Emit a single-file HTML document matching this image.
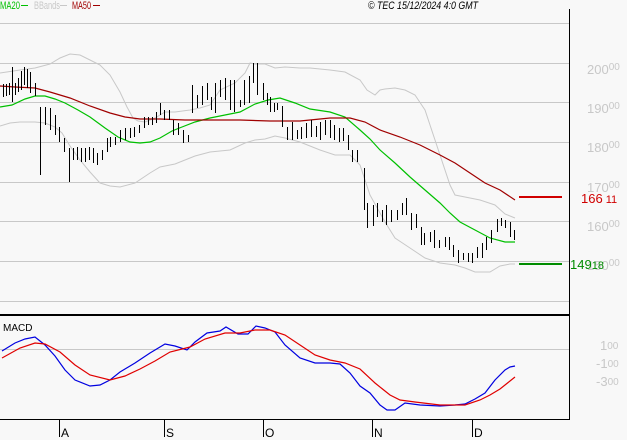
<!DOCTYPE html>
<html><head><meta charset="utf-8"><style>
html,body{margin:0;padding:0;background:#f8f8f8;}
svg{display:block;font-family:"Liberation Sans",Arial,sans-serif;}
</style></head><body>
<svg width="627" height="440" viewBox="0 0 627 440" xmlns="http://www.w3.org/2000/svg">
<rect width="627" height="440" fill="#f8f8f8"/>
<g stroke="#c8c8c8" stroke-width="1">
<line x1="0" y1="23.5" x2="569" y2="23.5"/>
<line x1="0" y1="63.5" x2="569" y2="63.5"/>
<line x1="0" y1="102.5" x2="569" y2="102.5"/>
<line x1="0" y1="142.5" x2="569" y2="142.5"/>
<line x1="0" y1="182.5" x2="569" y2="182.5"/>
<line x1="0" y1="221.5" x2="569" y2="221.5"/>
<line x1="0" y1="261.5" x2="569" y2="261.5"/>
<line x1="0" y1="301.5" x2="569" y2="301.5"/>
<line x1="0" y1="349.5" x2="569" y2="349.5"/>
</g>
<line x1="569.5" y1="9" x2="569.5" y2="420" stroke="#000"/>
<line x1="0" y1="315" x2="569" y2="315" stroke="#000" stroke-width="2"/>
<line x1="0" y1="419.5" x2="569" y2="419.5" stroke="#000"/>
<g stroke="#000"><line x1="59.5" y1="419" x2="59.5" y2="437"/><line x1="164.5" y1="419" x2="164.5" y2="437"/><line x1="263.5" y1="419" x2="263.5" y2="437"/><line x1="372.5" y1="419" x2="372.5" y2="437"/><line x1="472.5" y1="419" x2="472.5" y2="437"/></g>
<g font-size="12" fill="#000"><text x="61" y="437">A</text><text x="166" y="437">S</text><text x="265" y="437">O</text><text x="374" y="437">N</text><text x="474" y="437">D</text></g>
<g fill="none" stroke="#c8c8c8" stroke-width="1">
<polyline points="0,73 20,70 35,68 50,64 60,58 70,54 80,55 90,60 100,65 110,75 120,92 127,107 133,118 138,121 145,122 155,118 165,112 175,112 190,110 200,108 210,105 220,90 235,83 245,73 250,63 255,64 265,64 275,68 285,67 300,68 310,68 330,70 345,72 360,80 367,90 375,95 380,90 385,89 395,88 405,90 415,95 425,110 430,125 440,155 450,185 455,195 465,197 480,200 495,205 505,214 515,218"/>
<polyline points="0,126 10,123 20,122 35,122 45,123 55,127 62,133 70,146 80,160 90,172 100,183 110,186 120,187 135,183 150,173 160,167 175,164 185,160 195,156 210,152 230,150 245,143 255,140 265,139 275,136 285,138 300,142 320,150 335,155 350,155 360,165 370,195 385,222 395,238 410,248 425,258 440,263 455,265 465,268 475,272 490,272 500,266 510,264 515,264"/>
</g>
<polyline fill="none" stroke="#00c000" stroke-width="1.2" points="0,107 12,105 25,99 35,96 45,96 55,99 65,103 78,110 90,117 105,128 118,137 130,142 140,143 150,142 160,138 172,131 182,127 195,122 210,118 225,115 240,112 255,104 268,100 280,98 295,103 310,109 330,112 345,117 360,130 370,139 380,150 395,163 410,177 425,190 440,203 450,213 460,222 475,230 490,238 505,242 515,242"/>
<polyline fill="none" stroke="#a00000" stroke-width="1.2" points="0,86 15,87 35,88 50,92 70,98 90,106 110,113 125,117 140,119 160,119 185,120 210,120 240,120 270,121 300,121 330,118 350,118 365,122 380,130 400,137 420,145 440,155 455,163 470,173 485,183 500,190 515,200"/>
<g transform="translate(0.5,0)">
<path stroke="#000" stroke-width="1" fill="none" d="M3,84V97M6,84V96M9,83V95M12,67V102M15,83V95M18,78V92M21,71V90M24,67V85M27,69V88M30,72V93M35,83V96M40,107V175M45,107V125M50,108V130M55,115V135M59,127V142M64,138V152M69,148V182M73,148V160M77,147V160M81,148V162M85,148V162M89,147V160M93,148V163M97,153V165M102,150V160M107,138V152M110,137V147M115,137V145M120,130V142M125,128V140M130,128V138M134,127V137M139,125V133M144,117V128M148,117V125M152,117V125M156,112V123M160,103V115M164,110V120M169,110V120M173,120V135M178,123V135M183,130V143M188,135V142M192,85V113M197,95V108M202,86V105M207,83V100M211,97V110M215,83V113M220,80V97M225,78V100M230,80V110M234,80V112M240,100V107M244,80V105M249,76V103M253,63V83M257,63V95M263,83V100M267,93V105M270,97V112M274,103V112M277,103V110M282,106V127M287,127V140M292,122V140M297,130V139M301,127V139M306,123V138M311,120V137M316,126V137M320,122V140M325,120V135M330,120V138M334,125V140M339,128V142M343,128V141M348,135V150M352,150V162M357,150V162M364,168V210M367,203V228M373,205V226M377,203V217M382,210V222M386,205V225M391,210V222M397,210V220M402,203V215M406,198V215M411,213V230M416,214V228M421,227V245M424,233V245M430,232V242M434,230V248M439,240V248M445,237V247M449,237V250M453,245V257M458,250V263M463,253V260M468,253V262M472,253V263M477,247V258M482,243V258M486,237V250M491,230V243M497,219V232M501,218V226M505,220V228M510,222V237M514,230V240"/>
</g>
<line x1="519" y1="197" x2="562" y2="197" stroke="#d00000" stroke-width="2"/>
<line x1="519" y1="264" x2="562" y2="264" stroke="#008c00" stroke-width="2"/>
<g fill="#c8c8c8" font-size="13">
<text x="587" y="74">200<tspan font-size="10" dy="-4">00</tspan></text>
<text x="587" y="113">190<tspan font-size="10" dy="-4">00</tspan></text>
<text x="587" y="152">180<tspan font-size="10" dy="-4">00</tspan></text>
<text x="587" y="192">170<tspan font-size="10" dy="-4">00</tspan></text>
<text x="587" y="231">160<tspan font-size="10" dy="-4">00</tspan></text>
<text x="587" y="270">150<tspan font-size="10" dy="-4">00</tspan></text>
<text x="600" y="350">1<tspan font-size="10" dy="-1">00</tspan></text>
<text x="596" y="368">-1<tspan font-size="10" dy="-1">00</tspan></text>
<text x="596" y="386">-3<tspan font-size="10" dy="-1">00</tspan></text>
</g>
<text x="581" y="203" fill="#d00000" font-size="13">166<tspan font-size="11"> 11</tspan></text>
<text x="570" y="269" fill="#008c00" font-size="13">149<tspan font-size="11">18</tspan></text>
<text x="3" y="331" font-size="10" fill="#000">MACD</text>
<polyline fill="none" stroke="#0000e0" stroke-width="1.2" points="2,351 15,343 25,339 35,337 45,345 55,356 65,370 75,380 90,386 100,385 110,380 120,372 135,363 150,353 165,344 175,346 187,350 195,342 207,333 220,331 226,327 238,334 248,334 256,326 265,328 275,332 285,345 300,358 315,363 330,363 340,364 350,373 360,386 370,393 380,405 387,410 395,410 405,403 420,405 440,406 455,405 465,404 475,399 485,393 495,380 505,370 510,367 515,366"/>
<polyline fill="none" stroke="#e00000" stroke-width="1.2" points="2,358 20,348 35,343 45,344 60,352 75,365 90,375 110,380 125,376 140,369 155,361 170,352 190,347 205,339 225,333 240,333 255,330 270,330 285,335 300,345 315,355 330,360 345,363 360,369 375,383 390,395 400,400 415,402 440,405 465,405 480,400 490,395 500,389 510,381 515,377"/>
<g font-size="11">
<text x="0" y="9" fill="#00c000" textLength="20" lengthAdjust="spacingAndGlyphs">MA20</text><line x1="21" y1="5.5" x2="28" y2="5.5" stroke="#00c000"/>
<text x="34" y="9" fill="#c8c8c8" textLength="26" lengthAdjust="spacingAndGlyphs">BBands</text><line x1="60" y1="5.5" x2="67" y2="5.5" stroke="#c8c8c8"/>
<text x="72" y="9" fill="#a00000" textLength="19" lengthAdjust="spacingAndGlyphs">MA50</text><line x1="93" y1="5.5" x2="100" y2="5.5" stroke="#a00000"/>
<text x="368" y="9" fill="#000" font-style="italic" textLength="110" lengthAdjust="spacingAndGlyphs">© TEC 15/12/2024 4:0 GMT</text>
</g>
</svg>
</body></html>
